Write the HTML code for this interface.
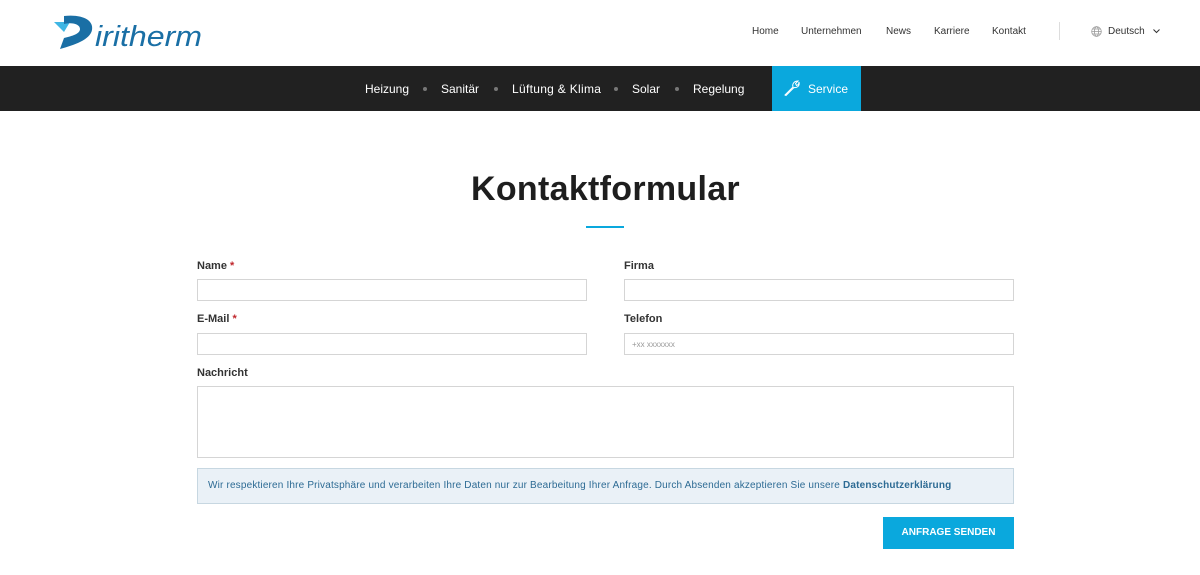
<!DOCTYPE html>
<html><head><meta charset="utf-8"><style>
*{box-sizing:border-box;margin:0;padding:0}
body{width:1200px;height:575px;background:#fff;font-family:"Liberation Sans",sans-serif;position:relative;overflow:hidden;color:#222}
.abs{position:absolute}
.top a{position:absolute;top:26px;font-size:10px;color:#333}
.bar{position:absolute;top:66px;left:0;width:1200px;height:45px;background:#212121}
.bar span{position:absolute;top:16px;font-size:12px;color:#fff}
.dot{position:absolute;top:21px;width:4px;height:4px;border-radius:2px;background:#777}
label{position:absolute;font-size:11px;font-weight:bold;color:#333}
label b{color:#c0262c}
.in{position:absolute;border:1px solid #d5d5d5;height:22px;width:390px;background:#fff}
</style></head><body>
<svg class="abs" style="left:52px;top:12px" width="160" height="40" viewBox="0 0 160 40">
<polygon points="2,10 18,10 12,20" fill="#3fb6e4"/>
<path d="M12,4 C30,2 42,8 40,18 C38,28 22,33 8,37 L12,26 C20,24 28,22 28,17 C28,12 20,10 12,12 Z" fill="#1a6fa5"/>
<text x="43" y="34" font-family="Liberation Sans" font-style="italic" font-size="29" fill="#1a6fa5" textLength="107" lengthAdjust="spacingAndGlyphs">iritherm</text>
</svg>
<div class="top">
<a style="left:752px">Home</a><a style="left:801px">Unternehmen</a><a style="left:886px">News</a><a style="left:934px">Karriere</a><a style="left:992px">Kontakt</a>
</div>
<div class="abs" style="left:1059px;top:22px;width:1px;height:18px;background:#ddd"></div>
<svg class="abs" style="left:1091px;top:26px" width="11" height="11" viewBox="0 0 11 11" fill="none" stroke="#999" stroke-width="0.8"><circle cx="5.5" cy="5.5" r="4.8"/><ellipse cx="5.5" cy="5.5" rx="2" ry="4.8"/><path d="M0.7 5.5H10.3M1.5 3H9.5M1.5 8H9.5"/></svg>
<div class="abs" style="left:1108px;top:26px;font-size:10px;color:#333">Deutsch</div>
<svg class="abs" style="left:1153px;top:29px" width="7" height="5"><path d="M0.5 0.5L3.5 3.5L6.5 0.5" stroke="#333" fill="none"/></svg>
<div class="bar">
<span style="left:365px">Heizung</span><div class="dot" style="left:423px"></div>
<span style="left:441px">Sanitär</span><div class="dot" style="left:494px"></div>
<span style="left:512px;letter-spacing:0.3px">Lüftung &amp; Klima</span><div class="dot" style="left:614px"></div>
<span style="left:632px">Solar</span><div class="dot" style="left:675px"></div>
<span style="left:693px">Regelung</span>
<div class="abs" style="left:772px;top:0;width:89px;height:45px;background:#0aa8dd"></div>
<svg class="abs" style="left:783px;top:13px" width="18" height="18" viewBox="0 0 18 18" fill="none" stroke="#fff" stroke-width="1"><path d="M2 16L10 8C9 5 11 2 15 2L12.5 4.5L13.5 6.5L15.5 5.5L16 3C17 7 14 9 11 8.5L3 16.5Z"/></svg>
<span style="left:808px">Service</span>
</div>
<div class="abs" style="left:471px;top:170px;font-size:34px;font-weight:bold;color:#1e1e1e;letter-spacing:0.3px">Kontaktformular</div>
<div class="abs" style="left:586px;top:226px;width:38px;height:2px;background:#0aa8dd"></div>
<label style="left:197px;top:260px">Name <b>*</b></label>
<label style="left:624px;top:260px">Firma</label>
<div class="in" style="left:197px;top:279px"></div>
<div class="in" style="left:624px;top:279px"></div>
<label style="left:197px;top:313px">E-Mail <b>*</b></label>
<label style="left:624px;top:313px">Telefon</label>
<div class="in" style="left:197px;top:333px"></div>
<div class="in" style="left:624px;top:333px;font-size:8px;color:#999;padding:6px 0 0 7px">+xx xxxxxxx</div>
<label style="left:197px;top:367px">Nachricht</label>
<div class="in" style="left:197px;top:386px;width:817px;height:72px"></div>
<div class="abs" style="left:197px;top:468px;width:817px;height:36px;background:#eaf1f7;border:1px solid #c7d7e1;font-size:10px;color:#2d6b94;padding:11px 0 0 10px;letter-spacing:0.17px;white-space:nowrap">Wir respektieren Ihre Privatsphäre und verarbeiten Ihre Daten nur zur Bearbeitung Ihrer Anfrage. Durch Absenden akzeptieren Sie unsere <b>Datenschutzerklärung</b></div>
<div class="abs" style="left:883px;top:517px;width:131px;height:32px;background:#0aa8dd;color:#fff;font-size:10px;font-weight:bold;text-align:center;line-height:32px">ANFRAGE SENDEN</div>
</body></html>
